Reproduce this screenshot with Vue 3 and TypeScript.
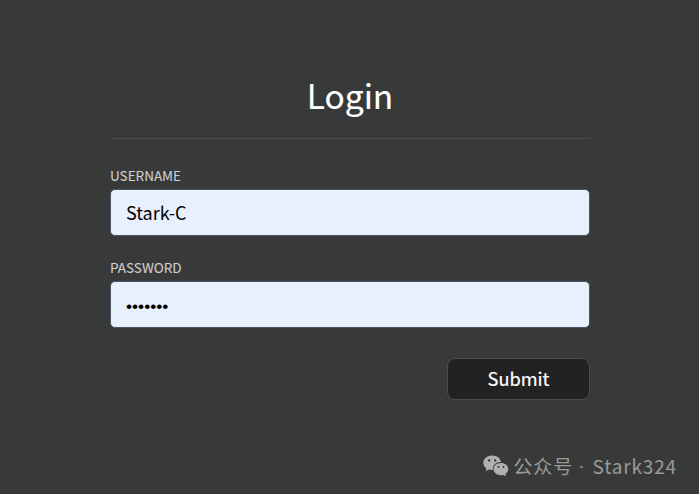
<script setup lang="ts">
import { ref } from 'vue'

const username = ref<string>('Stark-C')
const password = ref<string>('•••••••')
</script>

<template>
  <main class="page">
    <form class="login" @submit.prevent>
      <h1 class="title">Login</h1>
      <label class="field">
        <span class="label">USERNAME</span>
        <input v-model="username" class="input" type="text" spellcheck="false" />
      </label>
      <label class="field">
        <span class="label">PASSWORD</span>
        <input v-model="password" class="input secret" type="text" spellcheck="false" />
      </label>
      <button class="submit" type="submit">Submit</button>
    </form>
    <footer class="credit">
      <svg class="wechat" viewBox="0 0 26 22" aria-hidden="true">
        <path fill="#b0b0b0" d="M9.2 0.5C4.2 0.5 0.3 3.7 0.3 7.8c0 2.3 1.2 4.3 3.1 5.6l-0.8 2.8 3.2-1.6c1.1 0.3 2.2 0.5 3.4 0.5h0.6C9.2 10.4 13 7 17.7 7h0.4C17.5 3.3 13.8 0.5 9.2 0.5z" />
        <path fill="#b0b0b0" d="M17.9 7.9c-4.2 0-7.4 2.8-7.4 6.2s3.3 6.2 7.4 6.2c0.9 0 1.8-0.1 2.6-0.4l2.6 1.4-0.7-2.3c1.8-1.2 2.9-2.9 2.9-4.9 0-3.5-3.2-6.2-7.4-6.2z" />
        <g fill="#363737">
          <circle cx="6.2" cy="5.5" r="1.15" />
          <circle cx="12.2" cy="5.5" r="1.15" />
          <circle cx="15.5" cy="12.1" r="1" />
          <circle cx="20.4" cy="12.1" r="1" />
        </g>
      </svg>
      <span class="account">公众号</span>
      <span class="dot">·</span>
      <span class="name">Stark324</span>
    </footer>
  </main>
</template>

<style>
body {
  margin: 0;
}
</style>

<style scoped>
.page {
  box-sizing: border-box;
  height: 494px;
  display: flex;
  flex-direction: column;
  justify-content: space-between;
  padding: 69px 22px 13px 110px;
  background: #383a39;
  border-bottom: 3px solid #3b3539;
  font-family: "Noto Sans CJK SC", "Noto Sans", sans-serif;
}

.login {
  width: 480px;
  display: flex;
  flex-direction: column;
}

.title {
  box-sizing: border-box;
  height: 70px;
  margin: 0 0 28px;
  border-bottom: 1px solid #4b4d4c;
  color: #fff;
  font-size: 33.5px;
  font-weight: 400;
  line-height: 52px;
  text-align: center;
  -webkit-text-stroke: 0.15px #fff;
}

.field {
  display: flex;
  flex-direction: column;
  height: 92px;
}

.label {
  height: 22px;
  color: #cfd0d0;
  font-size: 13.5px;
  line-height: 17px;
  -webkit-text-stroke: 0.08px #cfd0d0;
}

.input {
  box-sizing: border-box;
  width: 480px;
  height: 47px;
  padding: 0 15px 2px;
  border: 1px solid #4b5264;
  border-radius: 5px;
  outline: none;
  background: #e8f0fe;
  color: #000;
  font-family: inherit;
  font-size: 18px;
}

.secret {
  padding: 3px 15px 0;
  font-family: "Liberation Sans", sans-serif;
  font-size: 17.3px;
}

.submit {
  box-sizing: border-box;
  align-self: flex-end;
  width: 143px;
  height: 42px;
  margin-top: 7px;
  padding: 0 0 2px;
  border: 1px solid #4b4d4c;
  border-radius: 8px;
  background: #222;
  color: #fff;
  font-family: inherit;
  font-size: 18.2px;
  font-weight: 400;
  -webkit-text-stroke: 0.2px #fff;
}

.credit {
  display: flex;
  align-items: center;
  align-self: flex-end;
  height: 24px;
  color: #999a9a;
  font-size: 19px;
  line-height: 24px;
}

.wechat {
  width: 26px;
  height: 22px;
  margin-right: 4px;
}

.account {
  letter-spacing: 1px;
}

.dot {
  margin: 0 8px 0 5px;
  font-family: "Liberation Sans", sans-serif;
}

.name {
  letter-spacing: 0.85px;
}
</style>
